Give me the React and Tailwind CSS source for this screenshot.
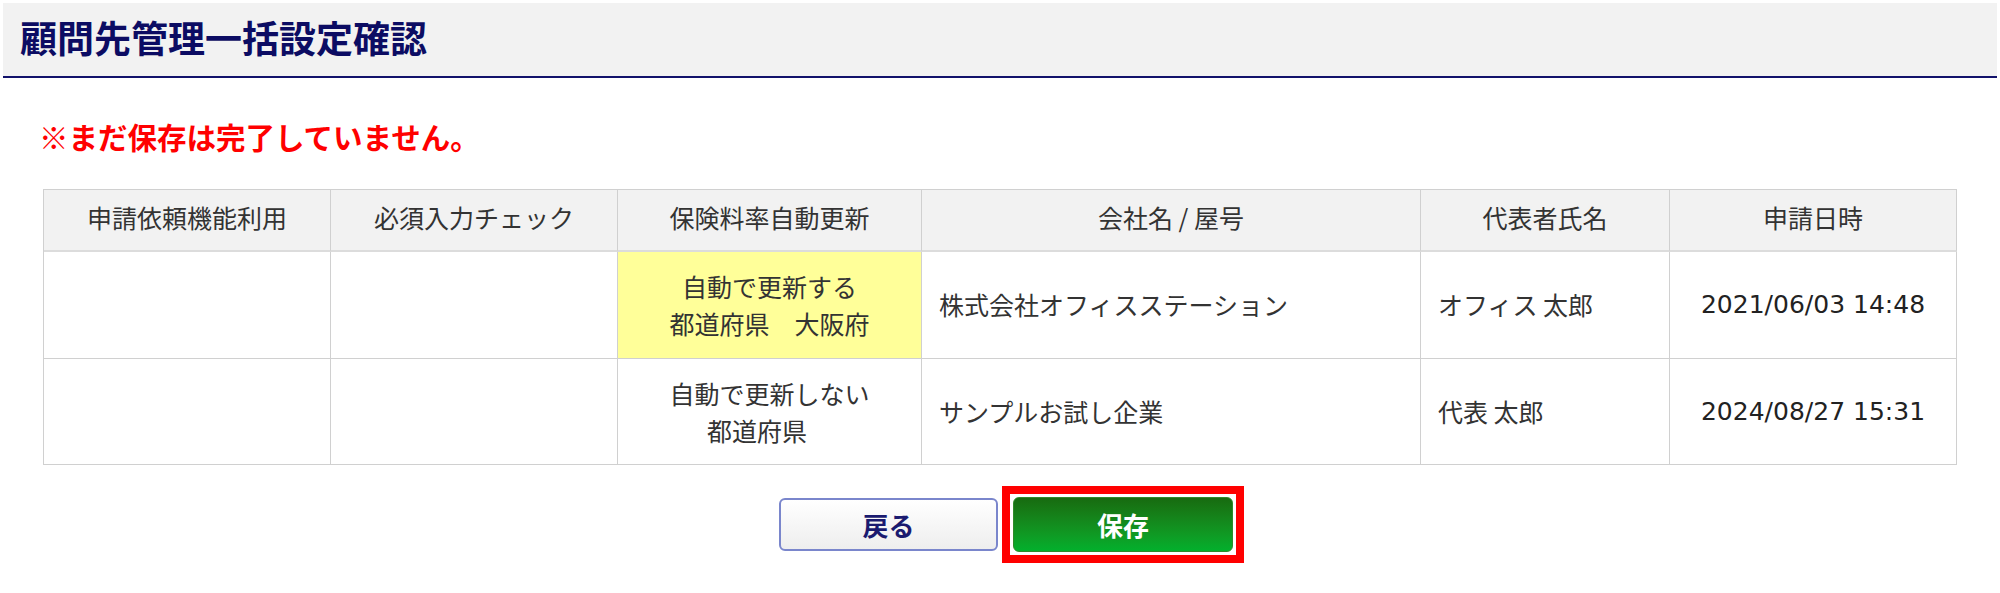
import React from "react";

const cols = [
  "w-[287px]",
  "w-[287px]",
  "w-[304px]",
  "w-[499px]",
  "w-[249px]",
  "w-[287px]",
];

const headers = [
  "申請依頼機能利用",
  "必須入力チェック",
  "保険料率自動更新",
  "会社名 / 屋号",
  "代表者氏名",
  "申請日時",
];

const rows = [
  {
    highlight: true,
    rate: ["自動で更新する", "都道府県　大阪府"],
    company: "株式会社オフィスステーション",
    rep: "オフィス 太郎",
    date: "2021/06/03 14:48",
    height: "h-[107px]",
  },
  {
    highlight: false,
    rate: ["自動で更新しない", "都道府県"],
    company: "サンプルお試し企業",
    rep: "代表 太郎",
    date: "2024/08/27 15:31",
    height: "h-[106px]",
  },
];

const cell = "border-r border-b border-[#d0d0d0] flex items-center";

const App = () => {
  return (
    <div className="w-[2000px] h-[593px] bg-white font-['Noto_Sans_CJK_JP',sans-serif] text-[#333]">
      <div className="mx-[3px] mt-[3px] h-[75px] bg-[#f2f2f2] border-b-2 border-[#12126b] flex items-center pl-[17px]">
        <h1 className="text-[37px] font-bold leading-none text-[#0c0c63] pb-[4px]">
          顧問先管理一括設定確認
        </h1>
      </div>

      <p className="mt-[43px] pl-[39px] text-[29.5px] leading-[30px] font-bold text-[#ff0000]">
        ※まだ保存は完了していません。
      </p>

      <div className="mt-[38px] ml-[43px] w-[1914px] border-l border-t border-[#d0d0d0] text-[25px]">
        <div className="flex">
          {headers.map((h, i) => (
            <div
              key={h}
              className={`${cols[i]} h-[62px] bg-[#f2f2f2] border-r border-[#d0d0d0] border-b-2 border-b-[#dcdcdc] flex items-center justify-center pb-[5px]`}
            >
              {h}
            </div>
          ))}
        </div>

        {rows.map((r) => (
          <div key={r.date} className="flex">
            <div className={`${cols[0]} ${r.height} ${cell}`} />
            <div className={`${cols[1]} ${r.height} ${cell}`} />
            <div
              className={`${cols[2]} ${r.height} ${cell} justify-center flex-col text-center leading-[37px] ${
                r.highlight ? "bg-[#ffff99]" : ""
              }`}
            >
              <span>{r.rate[0]}</span>
              {r.highlight ? (
                <span>{r.rate[1]}</span>
              ) : (
                <span className="pr-[1em]">{r.rate[1]}</span>
              )}
            </div>
            <div className={`${cols[3]} ${r.height} ${cell} pl-[17px]`}>
              {r.company}
            </div>
            <div className={`${cols[4]} ${r.height} ${cell} pl-[17px]`}>
              {r.rep}
            </div>
            <div
              className={`${cols[5]} ${r.height} ${cell} justify-center font-['DejaVu_Sans',sans-serif] text-[#222]`}
            >
              {r.date}
            </div>
          </div>
        ))}
      </div>

      <div className="mt-[32px] flex justify-center gap-[15px] pl-[12px]">
        <button className="w-[219px] h-[53px] mt-[1px] rounded-[6px] border-2 border-[#7a86cc] bg-linear-to-b from-white to-[#eeeeee] text-[26px] font-bold text-[#1b1b70] leading-none">
          戻る
        </button>
        <div className="relative">
          <button className="w-[220px] h-[55px] rounded-[6px] border border-[#2f8a2a] bg-linear-to-b from-[#176b10] to-[#02b02d] text-[26px] font-bold text-white leading-none">
            保存
          </button>
          <div className="absolute -inset-[11px] border-8 border-[#ff0000] pointer-events-none" />
        </div>
      </div>
    </div>
  );
};

export default App;
